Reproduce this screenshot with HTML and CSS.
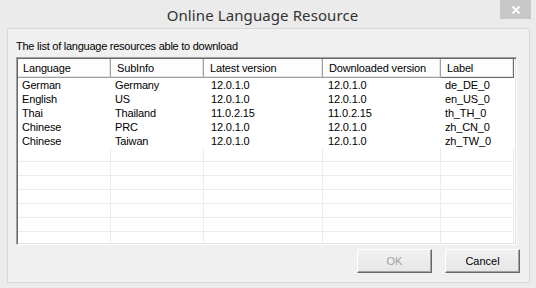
FILE: index.html
```html
<!DOCTYPE html>
<html lang="en">
<head>
<meta charset="UTF-8" />
<title>Online Language Resource</title>
<link rel="stylesheet" href="styles.css">
</head>
<body>

<div class="window">
  <div class="titlebar">
    <span class="title">Online Language Resource</span>
    <div class="close" title="Close">
      <svg width="10" height="10" viewBox="0 0 10 10"><path d="M1.5 1.5 L8.5 8.5 M8.5 1.5 L1.5 8.5" stroke="#fff" stroke-width="1.8" /></svg>
    </div>
  </div>

  <div class="client">
    <div class="caption">The list of language resources able to download</div>

    <div class="list">
      <div class="row head">
        <div class="cell">Language</div>
        <div class="cell">SubInfo</div>
        <div class="cell">Latest version</div>
        <div class="cell">Downloaded version</div>
        <div class="cell">Label</div>
      </div>
      <div id="rows"></div>
    </div>

    <div class="buttons">
      <button class="btn" disabled>OK</button>
      <button class="btn">Cancel</button>
    </div>
  </div>
</div>

<script>
  const resources = [
    ['German', 'Germany', '12.0.1.0', '12.0.1.0', 'de_DE_0'],
    ['English', 'US', '12.0.1.0', '12.0.1.0', 'en_US_0'],
    ['Thai', 'Thailand', '11.0.2.15', '11.0.2.15', 'th_TH_0'],
    ['Chinese', 'PRC', '12.0.1.0', '12.0.1.0', 'zh_CN_0'],
    ['Chinese', 'Taiwan', '12.0.1.0', '12.0.1.0', 'zh_TW_0']
  ];

  const rowsElem = document.getElementById('rows');

  resources.forEach(r => {
    const row = document.createElement('div');
    row.className = 'row item';
    r.forEach(text => {
      const cell = document.createElement('div');
      cell.className = 'cell';
      cell.textContent = text;
      row.appendChild(cell);
    });
    rowsElem.appendChild(row);
  });

  // righe vuote con griglia
  for (let i = 0; i < 7; i++) {
    const row = document.createElement('div');
    row.className = 'row empty';
    for (let j = 0; j < 5; j++) {
      const cell = document.createElement('div');
      cell.className = 'cell';
      row.appendChild(cell);
    }
    rowsElem.appendChild(row);
  }
</script>

</body>
</html>
```

FILE: styles.css
```css
body {
  margin: 0;
  padding: 0;
  width: 536px;
  height: 288px;
  overflow: hidden;
  background: #ebebeb;
  font-family: 'Liberation Sans', Arial, sans-serif;
  font-size: 11px;
  letter-spacing: -0.15px;
  color: #000;
}
.window {
  display: flex;
  flex-direction: column;
  height: 288px;
  padding: 0 6px 5px 7px;
  box-sizing: border-box;
}
.titlebar {
  position: relative;
  height: 28px;
  display: flex;
  justify-content: center;
  align-items: center;
}
.title {
  font-family: 'Noto Sans', 'Open Sans', sans-serif;
  font-size: 15px;
  letter-spacing: 0.1px;
  color: #333;
  margin-top: 1px;
  margin-right: 12px;
}
.close {
  position: absolute;
  top: 0;
  right: -1px;
  width: 31px;
  height: 19px;
  background: #c7c7c7;
  display: flex;
  justify-content: center;
  align-items: center;
}
.client {
  flex: 1;
  background: #f0f0f0;
  border: 1px solid #d8d8d8;
  padding: 11px 12px 0 8px;
  display: flex;
  flex-direction: column;
}
.caption {
  height: 13px;
  line-height: 13px;
  letter-spacing: -0.25px;
}
.list {
  margin-top: 4px;
  width: 501px;
  height: 188px;
  box-sizing: border-box;
  background: #fff;
  border-style: solid;
  border-width: 1px;
  border-color: #a0a0a0 #fff #fff #a0a0a0;
  box-shadow: inset 1px 1px 0 #696969, inset -1px -1px 0 #e3e3e3;
  padding: 1px 2px 0 1px;
  overflow: hidden;
}
.row {
  display: grid;
  grid-template-columns: 93px 93px 119px 118px 73px;
}
.row .cell {
  white-space: nowrap;
  overflow: hidden;
  box-sizing: border-box;
}
.head {
  height: 19px;
}
.head .cell {
  line-height: 18px;
  padding-left: 6px;
  background: #fdfdfd;
  border-right: 1px solid #a0a0a0;
  border-bottom: 1px solid #a0a0a0;
  box-shadow: inset -1px -1px 0 #e3e3e3;
}
.head .cell:first-child {
  padding-left: 5px;
}
.head .cell:last-child {
  border-right: 1px solid #696969;
  border-bottom: 1px solid #696969;
}
.item {
  height: 14px;
  line-height: 14px;
}
.item .cell {
  padding-left: 4px;
}
.item .cell:nth-child(3) {
  padding-left: 7px;
}
.item .cell:nth-child(4) {
  padding-left: 5px;
}
.item .cell:nth-child(5) {
  padding-left: 4px;
}
.empty {
  height: 14px;
}
.empty .cell {
  border-right: 1px solid #ececec;
  border-bottom: 1px solid #ececec;
}
.buttons {
  display: flex;
  justify-content: flex-end;
  gap: 13px;
  margin-top: 4px;
  margin-right: -3px;
}
.btn {
  width: 75px;
  height: 24px;
  font-family: 'Liberation Sans', Arial, sans-serif;
  font-size: 11px;
  color: #000;
  background: linear-gradient(#f2f2f2, #e6e6e6);
  border-style: solid;
  border-width: 1px;
  border-color: #fff #696969 #696969 #fff;
  box-shadow: inset -1px -1px 0 #a0a0a0;
  padding: 0;
}
.btn:disabled {
  color: #a0a0a0;
}
```
